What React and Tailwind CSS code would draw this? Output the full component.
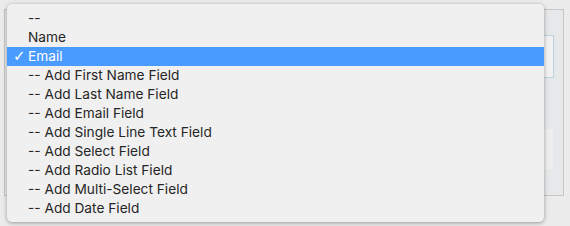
import React from "react";

const items = [
  "--",
  "Name",
  "Email",
  "-- Add First Name Field",
  "-- Add Last Name Field",
  "-- Add Email Field",
  "-- Add Single Line Text Field",
  "-- Add Select Field",
  "-- Add Radio List Field",
  "-- Add Multi-Select Field",
  "-- Add Date Field",
];

export default function App() {
  return (
    <div
      className="relative w-[570px] h-[226px] bg-[#ebebeb] overflow-hidden"
      style={{ fontFamily: 'Inter, "Liberation Sans", Arial, sans-serif' }}
    >
      <div className="absolute left-[4px] top-[9px] w-[560px] h-[187px] border border-[#c6c6c6] bg-[#e7e8e9]">
        <div className="ml-[20px] mt-[25px] w-[529px] h-[43px] border border-[#b9d3e3] bg-[#f1f1f1]" />
        <div className="ml-[20px] mt-[51px] w-[528px] h-[40px] bg-[#eeeeee]" />
      </div>
      <div className="absolute left-[7px] top-[4px] w-[537px] h-[218px] rounded-[5px] bg-[#f0f0f0] shadow-[0_1px_4px_rgba(0,0,0,0.35)] pt-[5px]">
        {items.map((t, i) => {
          const sel = t === "Email";
          return (
            <div
              key={i}
              className={`relative h-[19px] flex items-center pl-[21px] text-[13.7px] leading-none ${
                sel ? "bg-[#4a9bff] text-white" : "text-[#262626]"
              }`}
            >
              {sel && (
                <span
                  className="absolute left-[6px] top-[2px] text-[15px] font-bold"
                  style={{ fontFamily: '"DejaVu Sans", sans-serif' }}
                >
                  ✓
                </span>
              )}
              <span>{t}</span>
            </div>
          );
        })}
      </div>
    </div>
  );
}
